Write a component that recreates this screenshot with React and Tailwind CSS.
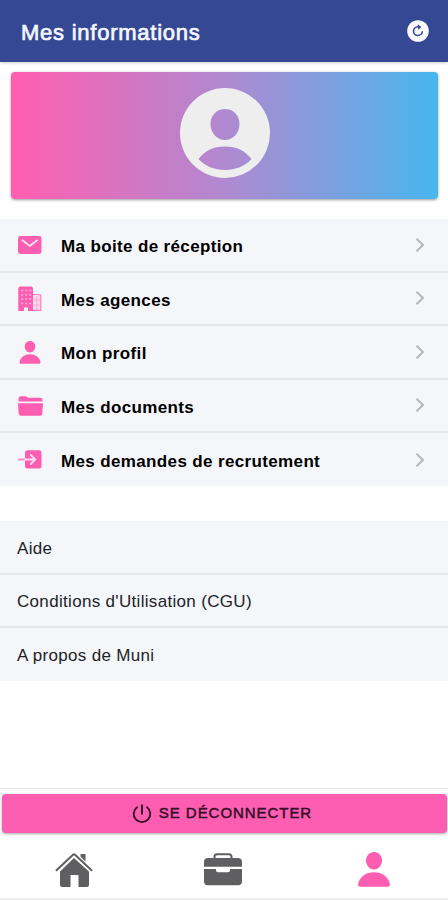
const MailIcon = () => (
  <svg viewBox="0 0 24 18" className="w-6 h-[18px]">
    <rect width="23.5" height="18" rx="2.4" fill="#fe5eb1" />
    <path
      d="M4.3 4.2 11.8 10l7.5-5.8"
      fill="none"
      stroke="#fbe9f4"
      strokeWidth="1.7"
      strokeLinecap="round"
      strokeLinejoin="round"
    />
  </svg>
);

const BuildingIcon = () => (
  <svg viewBox="0 0 24 26" className="w-6 h-[26px]">
    <path
      d="M2 .5h11a2 2 0 0 1 2 2V25h-5v-3.5H6V25H.3V2.5A2 2 0 0 1 2 .5Z"
      fill="#fe5eb1"
    />
    <path
      d="M15 8.5h6a1.8 1.8 0 0 1 1.8 1.8v14h-7.5"
      fill="#fdd9ec"
      stroke="#fe7cc0"
      strokeWidth="1.2"
    />
    <path
      d="M3.2 4.5h10M3.2 8.8h10M3.2 13.1h10M3.2 17.4h10"
      stroke="#fdb4db"
      strokeWidth="1.5"
      strokeDasharray="2 2"
    />
    <path d="M18.8 10v14M16 14h6M16 19h6" stroke="#fe9fd0" strokeWidth="0.8" />
  </svg>
);

const PersonIcon = ({ className }) => (
  <svg viewBox="0 0 32 35" className={className}>
    <path
      d="M16 0c4.6 0 8 3.6 8 8.4 0 5-3.6 9-8 9s-8-4-8-9C8 3.6 11.4 0 16 0Z"
      fill="#fe5eb1"
    />
    <path
      d="M16 20.2c8 0 14.5 4.6 15.9 11.8.3 1.6-.6 2.8-2.2 2.8H2.3C.7 34.8-.2 33.6.1 32 1.5 24.8 8 20.2 16 20.2Z"
      fill="#fe5eb1"
    />
  </svg>
);

const FolderIcon = () => (
  <svg viewBox="0 0 25 20" className="w-[25px] h-5" fill="#fe5eb1">
    <path d="M.6 5.6V2.5A2.2 2.2 0 0 1 2.8.3h4.4c1.5 0 1.9 1.5 3.5 1.5h11.5a2.3 2.3 0 0 1 2.3 2.3v1.5Z" />
    <path d="M0 7.2h25l-.7 10.2a2.4 2.4 0 0 1-2.4 2.3H3.1A2.4 2.4 0 0 1 .7 17.4Z" />
  </svg>
);

const EnterIcon = () => (
  <svg viewBox="0 0 24 19" className="w-6 h-[19px] -mt-px" fill="none">
    <rect x="7" y="0.3" width="16.5" height="18.2" rx="2.5" fill="#fe5eb1" />
    <path d="M.8 9.5H7" stroke="#fe8cc7" strokeWidth="1.8" strokeLinecap="round" />
    <path
      d="M7 9.5h10M12.8 5l4.5 4.5-4.5 4.5"
      stroke="#fddcee"
      strokeWidth="1.8"
      strokeLinecap="round"
      strokeLinejoin="round"
    />
  </svg>
);

const Chevron = () => (
  <svg viewBox="0 0 10 16" className="w-[10px] h-4 mr-[23px]" fill="none">
    <path d="m1.5 1.8 6.5 6.2-6.5 6.2" stroke="#b5b7bb" strokeWidth="2" />
  </svg>
);

const menu = [
  { label: "Ma boite de réception", icon: <MailIcon /> },
  { label: "Mes agences", icon: <BuildingIcon /> },
  { label: "Mon profil", icon: <PersonIcon className="w-[22px] h-[23px] mt-px" /> },
  { label: "Mes documents", icon: <FolderIcon /> },
  { label: "Mes demandes de recrutement", icon: <EnterIcon /> },
];

const links = ["Aide", "Conditions d'Utilisation (CGU)", "A propos de Muni"];

const App = () => {
  return (
    <div className="flex flex-col w-[448px] h-[900px] overflow-hidden bg-white font-['Liberation_Sans',Arial,sans-serif] text-black">
      <header className="flex items-center justify-between h-[62px] shrink-0 pl-[21px] pr-[19px] bg-[#344893] text-[#f5f6ff] shadow-[0_1px_3px_rgba(0,0,0,0.2)]">
        <h1 className="text-[22px] tracking-[0.75px] pt-[2px] [-webkit-text-stroke:0.7px_#f5f6ff]">
          Mes informations
        </h1>
        <svg viewBox="0 0 22 22" className="w-[22px] h-[22px]" fill="none">
          <circle cx="11" cy="11" r="10.8" fill="#fbfcff" />
          <path d="M15.3 11.2a4.4 4.4 0 1 1-4.4-4.5h1.2" stroke="#344893" strokeWidth="1.6" />
          <path d="m10.7 4.3 3.6 2.8-3 2.7" fill="#344893" />
        </svg>
      </header>

      <div className="flex justify-center h-[127px] shrink-0 mt-[10px] ml-[11px] mr-[10px] pt-[16px] rounded bg-[linear-gradient(to_right,#fe5fb1_2%,#b089d0_50%,#47b6ee)] shadow-[0_1px_3px_rgba(0,0,0,0.4)]">
        <svg viewBox="0 0 90 90" className="w-[90px] h-[90px]">
          <path
            d="M45 0a45 45 0 1 1 0 90 45 45 0 0 1 0-90Zm0 21c-8 0-14.5 6-14.5 15S37 52 45 52s14.5-7 14.5-16S53 21 45 21Zm0 37.5c-12 0-20.5 4.5-26.5 12.500C25 78 34 82 45 82s20-4 26.5-11C65.5 63 57 58.5 45 58.5Z"
            fill="#eeeeef"
            fillRule="evenodd"
          />
        </svg>
      </div>

      <ul className="mt-[20px] shrink-0 bg-[#f4f6fa]">
        {menu.map((item) => (
          <li
            key={item.label}
            className="flex items-center h-[53.5px] border-b-2 border-[#e5e7ea] last:h-[53px] last:border-b-0"
          >
            <div className="flex items-center justify-center w-[60px] pt-px shrink-0">
              {item.icon}
            </div>
            <span className="flex-1 pl-px pt-[4px] text-[17px] font-bold tracking-[0.36px]">
              {item.label}
            </span>
            <Chevron />
          </li>
        ))}
      </ul>

      <ul className="mt-[35px] shrink-0 bg-[#f4f6fa]">
        {links.map((link) => (
          <li
            key={link}
            className="flex items-center h-[53.5px] pl-[17px] pt-[3px] text-[17px] tracking-[0.32px] text-[#222326] border-b-2 border-[#e5e7ea] last:h-[52.5px] last:border-b-0"
          >
            {link}
          </li>
        ))}
      </ul>

      <footer className="mt-auto shrink-0 border-t border-[#e8e8e8] pt-[5px]">
        <button className="flex items-center justify-center gap-[7px] w-[445px] h-[39px] ml-[2px] pr-[5px] rounded bg-[#fe5eb1] shadow-[0_1px_3px_rgba(0,0,0,0.35)] text-[#35102a] text-[15px] tracking-[0.95px] [-webkit-text-stroke:0.5px_#35102a]">
          <svg viewBox="0 0 20 20" className="w-5 h-5" fill="none">
            <path
              d="M5 3.2a8.3 8.3 0 1 0 10 0M10 1.2v8.5"
              stroke="#35102a"
              strokeWidth="1.9"
              strokeLinecap="round"
            />
          </svg>
          SE DÉCONNECTER
        </button>
        <nav className="flex items-start h-[66px] mt-px pt-[17px] border-b-2 border-[#ececec]">
          <div className="flex justify-center flex-1">
            <svg viewBox="0 0 38 36" className="w-[38px] h-9 mt-px" fill="#5f5f61">
              <path d="M25.5 2h5v10.5l-5-4.3Z" />
              <path d="M19 6 34 19.500V33a2 2 0 0 1-2 2h-8.500V23h-8v12H7a2 2 0 0 1-2-2V19.500Z" />
              <path
                d="M1.5 18.3 18 2.7a1.5 1.5 0 0 1 2 0l16.5 15.6"
                fill="none"
                stroke="#fff"
                strokeWidth="4.5"
              />
              <path
                d="M1.5 18.3 18 2.7a1.5 1.5 0 0 1 2 0l16.5 15.6"
                fill="none"
                stroke="#5f5f61"
                strokeWidth="2"
                strokeLinecap="round"
              />
            </svg>
          </div>
          <div className="flex justify-center flex-1 pl-px">
            <svg viewBox="0 0 38 34" className="w-[38px] h-[34px] mt-px" fill="#5f5f61">
              <path
                d="M10.5 7V4.7A2.5 2.5 0 0 1 13 2.2h12a2.5 2.5 0 0 1 2.5 2.5V7"
                fill="none"
                stroke="#5f5f61"
                strokeWidth="2"
              />
              <path d="M4 6h30a4 4 0 0 1 4 4v4.800H0V10a4 4 0 0 1 4-4Z" />
              <path d="M0 17h12v1.200a2 2 0 0 0 2 2h10a2 2 0 0 0 2-2V17h12v12.300a4 4 0 0 1-4 4H4a4 4 0 0 1-4-4Z" />
            </svg>
          </div>
          <div className="flex justify-center flex-1 pl-[3px]">
            <PersonIcon className="w-8 h-[35px] mt-px" />
          </div>
        </nav>
      </footer>
    </div>
  );
};

export default App;
